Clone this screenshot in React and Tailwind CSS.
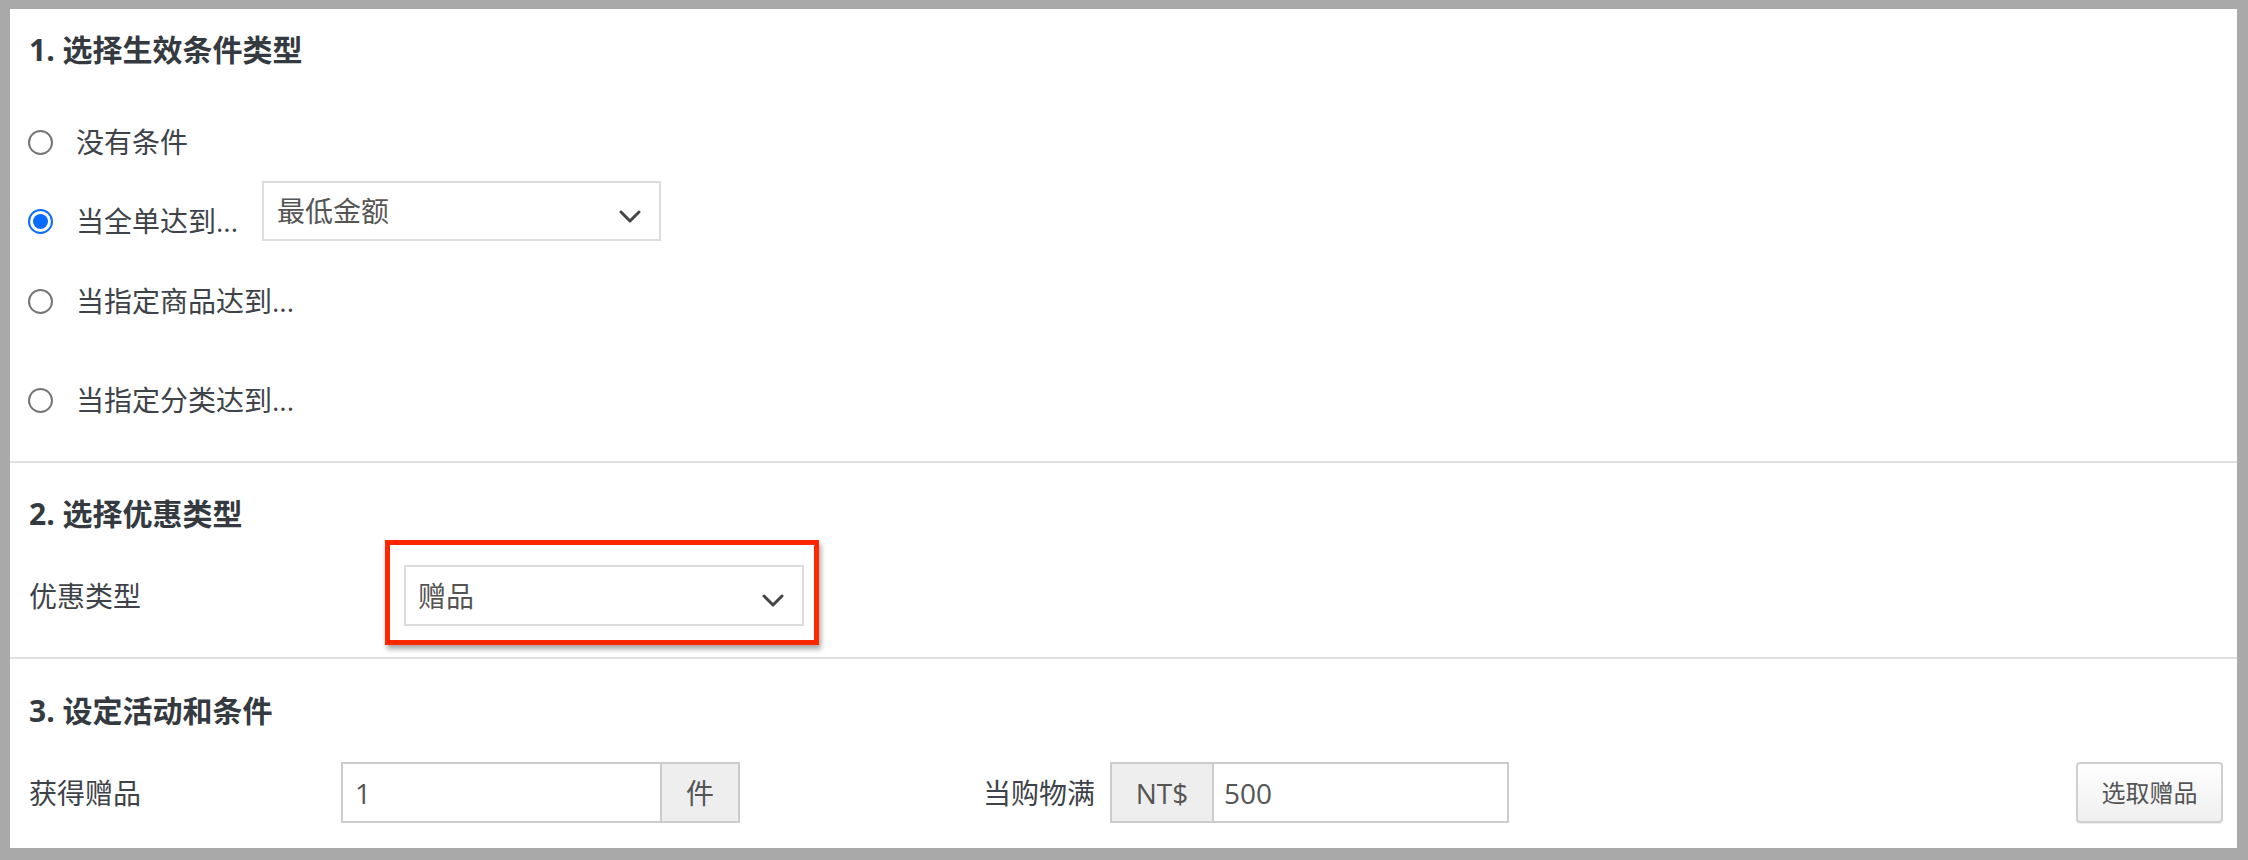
import React from "react";

function Radio({ checked }) {
  if (checked) {
    return (
      <span className="flex h-[25px] w-[25px] shrink-0 items-center justify-center rounded-full border-[2px] border-[#0a6cff] bg-white">
        <span className="h-[15px] w-[15px] rounded-full bg-[#0a6cff]" />
      </span>
    );
  }
  return <span className="h-[25px] w-[25px] shrink-0 rounded-full border-[2px] border-[#757575] bg-white" />;
}

function Chevron() {
  return (
    <svg width="22" height="13" viewBox="0 0 22 13" className="mt-[10px] shrink-0">
      <polyline
        points="2,2 11,11 20,2"
        fill="none"
        stroke="#454545"
        strokeWidth="3"
        strokeLinecap="round"
        strokeLinejoin="round"
      />
    </svg>
  );
}

function RadioRow({ checked, label, className = "" }) {
  return (
    <div className={"flex h-[40px] items-center " + className}>
      <Radio checked={checked} />
      <span className="ml-[23px] whitespace-nowrap">{label}</span>
    </div>
  );
}

export default function App() {
  return (
    <div className="flex h-[860px] w-[2248px] flex-col bg-[#a9a9a9] pb-[12px] pl-[10px] pr-[11px] pt-[9px]">
      <div className="flex flex-1 flex-col bg-white font-['Open_Sans','Noto_Sans_CJK_SC',sans-serif] text-[28px] leading-[40px] text-[#3e4349]">
        {/* Section 1 */}
        <section className="border-b-2 border-[#e0e0e0] pb-[41px] pl-[19px] pt-[20px]">
          <h2 className="text-[30px] font-bold leading-[42px] text-[#343a40]">1. 选择生效条件类型</h2>
          <RadioRow label="没有条件" className="-ml-px mt-[51px]" />
          <div className="mt-[19px] flex items-end">
            <RadioRow checked label="当全单达到..." className="-ml-px w-[234px]" />
            <div className="flex h-[60px] w-[399px] items-center justify-between border-2 border-[#dddddd] pl-[13px] pr-[18px] text-[#555]">
              <span>最低金额</span>
              <Chevron />
            </div>
          </div>
          <RadioRow label="当指定商品达到..." className="-ml-px mt-[40px]" />
          <RadioRow label="当指定分类达到..." className="-ml-px mt-[59px]" />
        </section>

        {/* Section 2 */}
        <section className="border-b-2 border-[#e0e0e0] pb-[31px] pl-[19px] pt-[30px]">
          <h2 className="text-[30px] font-bold leading-[42px] text-[#343a40]">2. 选择优惠类型</h2>
          <div className="mt-[30px] flex h-[61px] items-center">
            <span className="w-[375px]">优惠类型</span>
            <div className="relative h-full w-[400px]">
              <div className="flex h-full w-full items-center justify-between border-2 border-[#dddddd] pl-[12px] pr-[18px] text-[#555]">
                <span>赠品</span>
                <Chevron />
              </div>
              <div className="pointer-events-none absolute -bottom-[19px] -left-[19px] -right-[15px] -top-[25px] border-[5px] border-[#ff2600] shadow-[2px_4px_5px_rgba(0,0,0,0.35)]" />
            </div>
          </div>
        </section>

        {/* Section 3 */}
        <section className="flex-1 pb-[25px] pl-[19px] pr-[14px] pt-[31px]">
          <h2 className="text-[30px] font-bold leading-[42px] text-[#343a40]">3. 设定活动和条件</h2>
          <div className="mt-[30px] flex h-[61px] items-center">
            <span className="w-[312px]">获得赠品</span>
            <div className="flex h-full w-[399px] border-2 border-[#cccccc]">
              <div className="flex flex-1 items-center pl-[12px] text-[#555]">1</div>
              <div className="flex w-[78px] items-center justify-center border-l-2 border-[#cccccc] bg-[#eeeeee] text-[#555]">件</div>
            </div>
            <span className="ml-[243px] whitespace-nowrap">当购物满</span>
            <div className="ml-[15px] flex h-full w-[399px] border-2 border-[#cccccc]">
              <div className="flex w-[102px] items-center justify-center border-r-2 border-[#cccccc] bg-[#eeeeee] text-[#555]">NT$</div>
              <div className="flex flex-1 items-center pl-[10px] text-[#555]">500</div>
            </div>
            <button className="ml-auto h-full w-[147px] rounded-[4px] border-2 border-[#d0d0d0] bg-gradient-to-b from-white to-[#efefef] text-[24px] text-[#555] shadow-[0_1px_1px_rgba(0,0,0,0.08)]">
              选取赠品
            </button>
          </div>
        </section>
      </div>
    </div>
  );
}
